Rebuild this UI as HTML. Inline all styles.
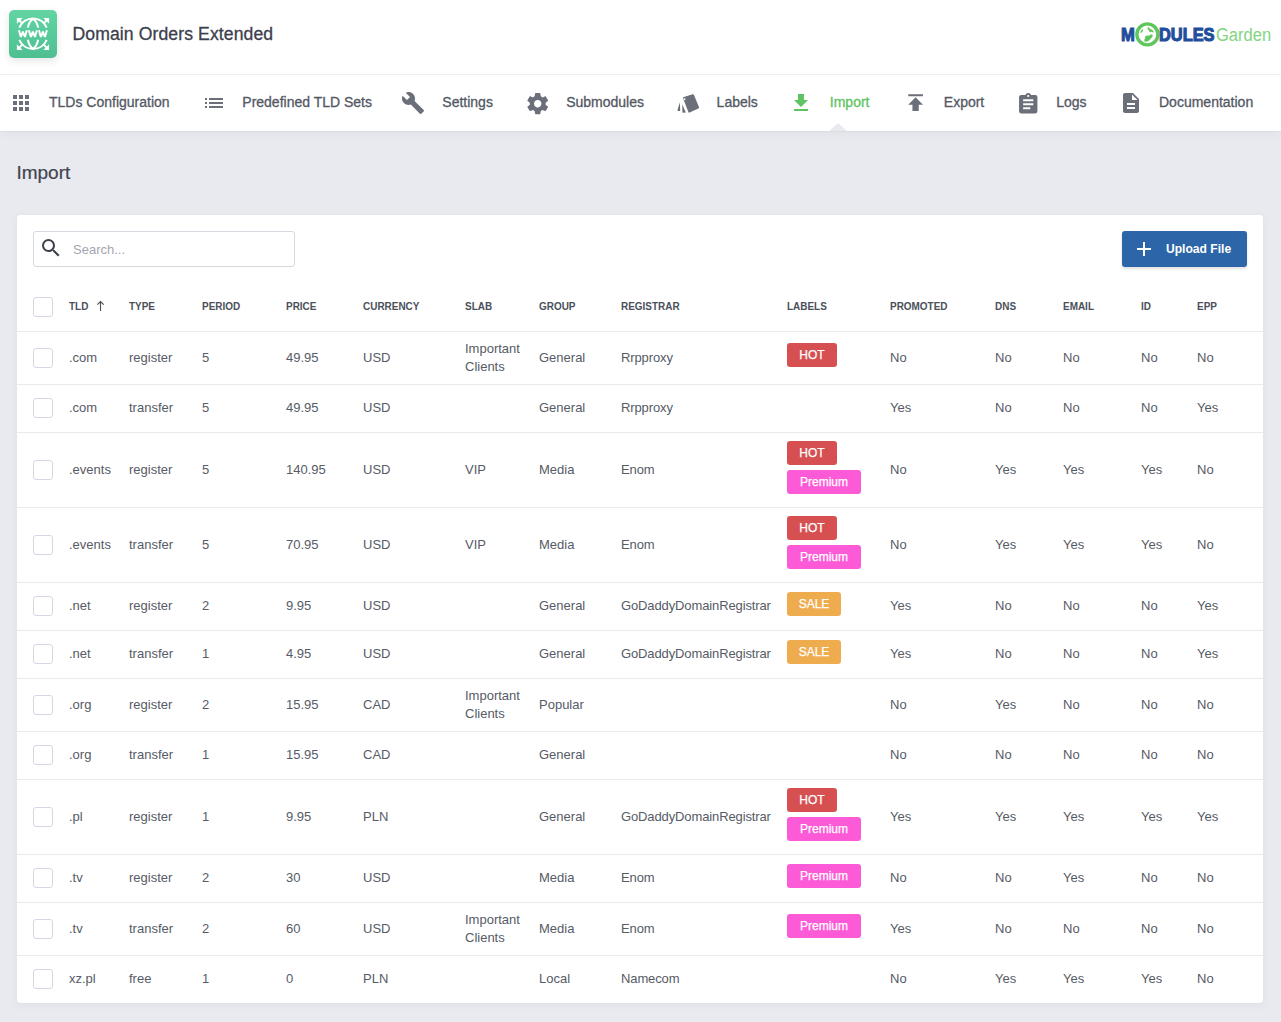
<!DOCTYPE html>
<html><head><meta charset="utf-8">
<style>
*{box-sizing:border-box;margin:0;padding:0}
html,body{width:1281px;height:1022px;overflow:hidden}
body{background:#e9eaef;font-family:"Liberation Sans",sans-serif;position:relative;color:#555a65}
#hdr{position:absolute;left:0;top:0;width:1281px;height:75px;background:#fff;border-bottom:1px solid #eeeff2}
#logo{position:absolute;left:9px;top:10px;width:48px;height:48px;border-radius:5px;background:linear-gradient(180deg,#62d5a3,#4fbf92);box-shadow:0 3px 8px rgba(0,0,0,.10)}
#logo svg{position:absolute;left:0;top:0}
#title{position:absolute;left:72.5px;top:23px;font-size:17.6px;color:#3b404c;white-space:nowrap;line-height:22px;-webkit-text-stroke:0.3px currentColor;letter-spacing:0.1px}
#mg{position:absolute;left:1115px;top:18px;width:165px;height:34px}
#nav{position:absolute;left:0;top:75px;width:1281px;height:56px;background:#fff;box-shadow:0 1px 2px rgba(0,0,0,.03),0 3px 9px rgba(0,0,0,.035)}
.ni{position:absolute;top:0;height:56px}
.ni svg{position:absolute;top:16px;left:0}
.nt{position:absolute;top:19px;font-size:14px;line-height:17px;color:#535864;white-space:nowrap;-webkit-text-stroke:0.3px currentColor}
.act .nt{color:#5cc462}
#caret{position:absolute;left:829px;top:123px;width:0;height:0;border-left:9px solid transparent;border-right:9px solid transparent;border-bottom:8px solid #e9eaef}
#ptitle{position:absolute;left:16.4px;top:162px;font-size:19px;line-height:22px;color:#3f4450;-webkit-text-stroke:0.2px currentColor}
#card{position:absolute;left:17px;top:215px;width:1246px;height:788px;background:#fff;border-radius:4px;box-shadow:0 2px 8px rgba(30,35,60,.05)}
#search{position:absolute;left:16px;top:16px;width:262px;height:36px;border:1px solid #d7d9e0;border-radius:3px}
#search svg{position:absolute;left:5px;top:4px}
#search span{position:absolute;left:39px;top:10px;font-size:13px;line-height:15px;color:#a3a6ae}
#upl{position:absolute;left:1105px;top:16px;width:125px;height:36px;background:#2d66a8;border-radius:3px;box-shadow:0 2px 3px rgba(0,0,0,.12)}
#upl svg{position:absolute;left:14px;top:10px}
#upl span{position:absolute;left:44px;top:10px;font-size:13px;font-weight:700;color:#fff;line-height:16px;white-space:nowrap;transform:scaleX(.93);transform-origin:0 50%}
.grid{position:absolute;left:0;top:68px;border-collapse:collapse;table-layout:fixed;width:1246px}
.grid th{height:48px;text-align:left;vertical-align:middle;padding:0;font-size:11px;font-weight:700;color:#4b505b;white-space:nowrap;border-bottom:1px solid #e9eaee}
.grid td{text-align:left;vertical-align:middle;padding:0;font-size:13px;line-height:18px;color:#565b66;white-space:nowrap;border-bottom:1px solid #e9eaee}
.grid tr:last-child td{border-bottom:none}
.reg{letter-spacing:-0.12px}
.hx{display:inline-block;transform:translateY(-1px) scaleX(.905);transform-origin:0 50%}
.arr{position:absolute;left:79px;top:17px}
.cb{display:block;margin-left:16px;width:20px;height:20px;border:1px solid #d5d8e2;border-radius:3px}
.lbl{display:inline-block;height:24px;line-height:24px;border-radius:3px;color:#fff;font-size:12px;padding:0;text-align:center;-webkit-text-stroke:0.25px #fff;margin:0 0 5px 0;float:left;clear:left}
.hot{background:#d65051;width:50px}
.prem{background:#fd5ad7;width:74px}
.sale{background:#efac4f;width:54px}
</style></head><body>
<div id="hdr">
  <div id="logo"><svg width="48" height="48" viewBox="0 0 48 48"><g fill="none" stroke="#fff" stroke-width="2" stroke-linecap="butt">
<path d="M10.3 17.6 A14.8 14.8 0 0 1 37.7 17.6"/>
<path d="M10.3 29.8 A14.8 14.8 0 0 0 37.7 29.8"/>
<path d="M18.8 17.6 Q20.3 11 24 9.2 Q27.7 11 29.2 17.6"/>
<path d="M18.8 29.8 Q20.3 36.5 24 38.8 Q27.7 36.5 29.2 29.8"/>
<path d="M9 9 L13.6 13.6 M39 9 L34.4 13.6 M9 39 L13.6 34.4 M39 39 L34.4 34.4" stroke-width="1.8"/>
</g><g fill="#fff">
<path d="M7.9 8 H13.7 L11.6 10.1 L10.1 11.6 L7.9 13.7 Z"/>
<path d="M40.1 8 H34.3 L36.4 10.1 L37.9 11.6 L40.1 13.7 Z"/>
<path d="M7.9 40 H13.7 L11.6 37.9 L10.1 36.4 L7.9 34.3 Z"/>
<path d="M40.1 40 H34.3 L36.4 37.9 L37.9 36.4 L40.1 34.3 Z"/>
<path fill="none" stroke="#fff" stroke-width="2" stroke-linejoin="bevel" d="M9.9 20.2 L11.9 27.0 L13.9 21.6 L15.9 27.0 L17.9 20.2 M19.9 20.2 L21.9 27.0 L23.9 21.6 L25.9 27.0 L27.9 20.2 M29.9 20.2 L31.9 27.0 L33.9 21.6 L35.9 27.0 L37.9 20.2"/>
</g></svg></div>
  <div id="title">Domain Orders Extended</div>
  <div id="mg"><svg width="165" height="34" viewBox="1115 18 165 34" style="position:absolute;left:0;top:0">
<text x="1120.9" y="41.2" font-family="Liberation Sans" font-weight="700" font-size="18.4" fill="#1f4e9b" stroke="#1f4e9b" stroke-width="1.1" textLength="13.8" lengthAdjust="spacingAndGlyphs">M</text>
<circle cx="1147.4" cy="34.4" r="10.5" fill="#fff" stroke="#5ec65b" stroke-width="3.4"/>
<path fill="#5ec65b" d="M1142.4 29.2 L1143.2 29.6 L1142.8 31.2 L1141.6 32.6 L1140.6 33.2 L1140.4 32.2 L1141.2 30.6 Z M1147.8 27.0 L1149.4 27.8 L1150.2 29.2 L1151.8 29.6 L1153.4 31.0 L1153.6 32.4 L1152.2 32.2 L1151.0 31.6 L1150.4 32.6 L1149.2 31.6 L1148.8 30.2 L1147.6 29.0 Z M1151.8 34.4 L1152.8 35.0 L1152.4 36.8 L1151.0 38.6 L1149.4 40.2 L1147.6 41.4 L1145.6 41.8 L1144.4 41.2 L1144.2 39.8 L1145.2 38.4 L1144.8 37.0 L1146.0 36.0 L1147.4 35.6 L1148.8 35.8 L1150.2 34.8 Z"/>
<text x="1159" y="41.0" font-family="Liberation Sans" font-weight="700" font-size="18.4" fill="#1f4e9b" stroke="#1f4e9b" stroke-width="1.1" textLength="55.5" lengthAdjust="spacingAndGlyphs">DULES</text>
<text x="1216" y="41.2" font-family="Liberation Sans" font-weight="400" font-size="18.8" fill="#82d47f" textLength="55.2" lengthAdjust="spacingAndGlyphs">Garden</text>
</svg></div>
</div>
<div id="nav">
<svg style="position:absolute;left:9px;top:16px" width="24.00" height="24.00" viewBox="0 0 24 24"><path fill="#6b6f79" d="M4 8h4V4H4v4zm6 12h4v-4h-4v4zm-6 0h4v-4H4v4zm0-6h4v-4H4v4zm6 0h4v-4h-4v4zm6-10v4h4V4h-4zm-6 4h4V4h-4v4zm6 6h4v-4h-4v4zm0 6h4v-4h-4v4z"/></svg>
<svg style="position:absolute;left:201.5px;top:16px" width="24.00" height="24.00" viewBox="0 0 24 24"><path fill="#6b6f79" d="M3 13h2v-2H3v2zm0 4h2v-2H3v2zm0-8h2V7H3v2zm4 4h14v-2H7v2zm0 4h14v-2H7v2zM7 7v2h14V7H7z"/></svg>
<svg style="position:absolute;left:401.4px;top:15.5px" width="24.00" height="24.00" viewBox="0 0 24 24"><path fill="#6b6f79" d="M22.7 19l-9.1-9.1c.9-2.3.4-5-1.5-6.9-2-2-5-2.4-7.4-1.3L9 6 6 9 1.6 4.7C.4 7.1.9 10.1 2.9 12.1c1.9 1.9 4.6 2.4 6.9 1.5l9.1 9.1c.4.4 1 .4 1.4 0l2.3-2.3c.5-.4.5-1.1.1-1.4z"/></svg>
<svg style="position:absolute;left:525.2px;top:16.200000000000003px" width="25.44" height="25.44" viewBox="0 0 24 24"><path fill="#6b6f79" d="M19.43 12.98c.04-.32.07-.64.07-.98s-.03-.66-.07-.98l2.11-1.65c.19-.15.24-.42.12-.64l-2-3.46c-.12-.22-.39-.3-.61-.22l-2.49 1c-.52-.4-1.08-.73-1.69-.98l-.38-2.65C14.460 2.18 14.25 2 14 2h-4c-.25 0-.46.18-.49.42l-.38 2.65c-.61.25-1.17.59-1.690.98l-2.49-1c-.23-.09-.49 0-.61.22l-2 3.46c-.13.22-.07.49.12.64l2.11 1.65c-.04.32-.07.65-.07.98s.03.66.07.98l-2.11 1.65c-.19.15-.24.42-.12.64l2 3.46c.12.22.39.3.61.22l2.49-1c.52.4 1.08.73 1.69.98l.38 2.65c.03.24.24.42.49.42h4c.25 0 .46-.18.49-.42l.38-2.65c.61-.25 1.17-.59 1.69-.98l2.49 1c.23.09.49 0 .61-.22l2-3.46c.12-.22.07-.49-.12-.64l-2.110-1.65zM12 15.5c-1.93 0-3.5-1.57-3.5-3.5s1.57-3.5 3.5-3.5 3.5 1.57 3.5 3.5-1.57 3.5-3.5 3.5z"/></svg>
<svg style="position:absolute;left:789.3px;top:15.900000000000006px" width="24.00" height="24.00" viewBox="0 0 24 24"><path fill="#5cc462" d="M19 9h-4V3H9v6H5l7 7 7-7zM5 18v2h14v-2H5z"/></svg>
<svg style="position:absolute;left:902.9px;top:15.200000000000003px" width="25.20" height="25.20" viewBox="0 0 24 24"><path fill="#6b6f79" d="M5 4v2h14V4H5zm0 10h4v6h6v-6h4l-7-7-7 7z"/></svg>
<svg style="position:absolute;left:1015.8px;top:16.599999999999994px" width="24.48" height="24.48" viewBox="0 0 24 24"><path fill="#6b6f79" d="M19 3h-4.18C14.4 1.84 13.3 1 12 1c-1.3 0-2.4.84-2.82 2H5c-1.1 0-2 .9-2 2v14c0 1.1.9 2 2 2h14c1.1 0 2-.9 2-2V5c0-1.1-.9-2-2-2zm-7 0c.55 0 1 .45 1 1s-.45 1-1 1-1-.45-1-1 .45-1 1-1zm2 14H7v-2h7v2zm3-4H7v-2h10v2zm0-4H7V7h10v2z"/></svg>
<svg style="position:absolute;left:1119px;top:16.200000000000003px" width="24.00" height="24.00" viewBox="0 0 24 24"><path fill="#6b6f79" d="M14 2H6c-1.1 0-1.990.9-1.99 2L4 20c0 1.1.89 2 1.99 2H18c1.1 0 2-.9 2-2V8l-6-6zm2 16H8v-2h8v2zm0-4H8v-2h8v2zm-3-5V3.5L18.5 9H13z"/></svg>
<svg style="position:absolute;left:670px;top:13px" width="40" height="30" viewBox="670 88 40 30"><path fill="#6b6f79" d="M683.2 97.2 L692.6 94.2 Q693.6 93.9 694 94.9 L699 107.2 Q699.3 108.1 698.4 108.5 L689.6 112.6 Q688.7 113 688.4 112 L683 98.3 Q682.7 97.4 683.2 97.2 Z M684.6 98.2 a0.9 0.9 0 1 0 0.01 0 Z" fill-rule="evenodd"/><path fill="#6b6f79" d="M679.9 102.3 L677.5 109.9 Q677.3 110.8 678.2 110.9 L680.2 110.9 Z M682.3 104.2 L682.4 112.2 Q682.5 112.9 683.3 112.8 L685.8 112.5 Z"/></svg>
<div class="nt" style="left:49.0px"><span>TLDs Configuration</span></div>
<div class="nt" style="left:242.3px"><span>Predefined TLD Sets</span></div>
<div class="nt" style="left:442.3px"><span>Settings</span></div>
<div class="nt" style="left:566.2px"><span>Submodules</span></div>
<div class="nt" style="left:716.6px"><span>Labels</span></div>
<div class="nt" style="left:829.8px"><span style="color:#5cc462">Import</span></div>
<div class="nt" style="left:943.8px"><span>Export</span></div>
<div class="nt" style="left:1056.2px"><span>Logs</span></div>
<div class="nt" style="left:1159.0px"><span>Documentation</span></div>
</div>
<div id="caret"></div>
<div id="ptitle">Import</div>
<div id="card">
  <div id="search"><svg width="24" height="24" viewBox="0 0 24 24"><path fill="#3b404b" d="M15.5 14h-.79l-.28-.27A6.471 6.471 0 0 0 16 9.5 6.5 6.5 0 1 0 9.5 16c1.61 0 3.09-.59 4.23-1.57l.27.28v.79l5 4.99L20.49 19l-4.99-5zm-6 0C7.01 14 5 11.99 5 9.5S7.01 5 9.5 5 14 7.01 14 9.5 11.99 14 9.5 14z"/></svg><span>Search...</span></div>
  <div id="upl"><svg width="16" height="16" viewBox="0 0 16 16"><path d="M8 1v14M1 8h14" stroke="#fff" stroke-width="2"/></svg><span>Upload File</span></div>
<table class="grid"><colgroup>
<col style="width:52px">
<col style="width:60px">
<col style="width:73px">
<col style="width:84px">
<col style="width:77px">
<col style="width:102px">
<col style="width:74px">
<col style="width:82px">
<col style="width:166px">
<col style="width:103px">
<col style="width:105px">
<col style="width:68px">
<col style="width:78px">
<col style="width:56px">
<col style="width:66px">
</colgroup><thead><tr>
<th><span class="cb"></span></th>
<th><span class="hx">TLD</span><svg class="arr" width="10" height="14" viewBox="96 300 10 14"><path d="M100.5 301.6V311M97.3 304.7L100.5 301.5 103.7 304.7" fill="none" stroke="#4b505b" stroke-width="1.1"/></svg></th>
<th><span class="hx">TYPE</span></th>
<th><span class="hx">PERIOD</span></th>
<th><span class="hx">PRICE</span></th>
<th><span class="hx">CURRENCY</span></th>
<th><span class="hx">SLAB</span></th>
<th><span class="hx">GROUP</span></th>
<th><span class="hx">REGISTRAR</span></th>
<th><span class="hx">LABELS</span></th>
<th><span class="hx">PROMOTED</span></th>
<th><span class="hx">DNS</span></th>
<th><span class="hx">EMAIL</span></th>
<th><span class="hx">ID</span></th>
<th><span class="hx">EPP</span></th>
</tr></thead><tbody>
<tr style="height:53px">
<td><span class="cb"></span></td>
<td>.com</td>
<td>register</td>
<td>5</td>
<td>49.95</td>
<td>USD</td>
<td class="slab">Important<br>Clients</td>
<td>General</td>
<td class="reg">Rrpproxy</td>
<td><span class="lbl hot">HOT</span></td>
<td>No</td>
<td>No</td>
<td>No</td>
<td>No</td>
<td>No</td>
</tr>
<tr style="height:48px">
<td><span class="cb"></span></td>
<td>.com</td>
<td>transfer</td>
<td>5</td>
<td>49.95</td>
<td>USD</td>
<td class="slab"></td>
<td>General</td>
<td class="reg">Rrpproxy</td>
<td></td>
<td>Yes</td>
<td>No</td>
<td>No</td>
<td>No</td>
<td>Yes</td>
</tr>
<tr style="height:75px">
<td><span class="cb"></span></td>
<td>.events</td>
<td>register</td>
<td>5</td>
<td>140.95</td>
<td>USD</td>
<td class="slab">VIP</td>
<td>Media</td>
<td class="reg">Enom</td>
<td><span class="lbl hot">HOT</span><span class="lbl prem">Premium</span></td>
<td>No</td>
<td>Yes</td>
<td>Yes</td>
<td>Yes</td>
<td>No</td>
</tr>
<tr style="height:75px">
<td><span class="cb"></span></td>
<td>.events</td>
<td>transfer</td>
<td>5</td>
<td>70.95</td>
<td>USD</td>
<td class="slab">VIP</td>
<td>Media</td>
<td class="reg">Enom</td>
<td><span class="lbl hot">HOT</span><span class="lbl prem">Premium</span></td>
<td>No</td>
<td>Yes</td>
<td>Yes</td>
<td>Yes</td>
<td>No</td>
</tr>
<tr style="height:48px">
<td><span class="cb"></span></td>
<td>.net</td>
<td>register</td>
<td>2</td>
<td>9.95</td>
<td>USD</td>
<td class="slab"></td>
<td>General</td>
<td class="reg">GoDaddyDomainRegistrar</td>
<td><span class="lbl sale">SALE</span></td>
<td>Yes</td>
<td>No</td>
<td>No</td>
<td>No</td>
<td>Yes</td>
</tr>
<tr style="height:48px">
<td><span class="cb"></span></td>
<td>.net</td>
<td>transfer</td>
<td>1</td>
<td>4.95</td>
<td>USD</td>
<td class="slab"></td>
<td>General</td>
<td class="reg">GoDaddyDomainRegistrar</td>
<td><span class="lbl sale">SALE</span></td>
<td>Yes</td>
<td>No</td>
<td>No</td>
<td>No</td>
<td>Yes</td>
</tr>
<tr style="height:53px">
<td><span class="cb"></span></td>
<td>.org</td>
<td>register</td>
<td>2</td>
<td>15.95</td>
<td>CAD</td>
<td class="slab">Important<br>Clients</td>
<td>Popular</td>
<td class="reg"></td>
<td></td>
<td>No</td>
<td>Yes</td>
<td>No</td>
<td>No</td>
<td>No</td>
</tr>
<tr style="height:48px">
<td><span class="cb"></span></td>
<td>.org</td>
<td>transfer</td>
<td>1</td>
<td>15.95</td>
<td>CAD</td>
<td class="slab"></td>
<td>General</td>
<td class="reg"></td>
<td></td>
<td>No</td>
<td>No</td>
<td>No</td>
<td>No</td>
<td>No</td>
</tr>
<tr style="height:75px">
<td><span class="cb"></span></td>
<td>.pl</td>
<td>register</td>
<td>1</td>
<td>9.95</td>
<td>PLN</td>
<td class="slab"></td>
<td>General</td>
<td class="reg">GoDaddyDomainRegistrar</td>
<td><span class="lbl hot">HOT</span><span class="lbl prem">Premium</span></td>
<td>Yes</td>
<td>Yes</td>
<td>Yes</td>
<td>Yes</td>
<td>Yes</td>
</tr>
<tr style="height:48px">
<td><span class="cb"></span></td>
<td>.tv</td>
<td>register</td>
<td>2</td>
<td>30</td>
<td>USD</td>
<td class="slab"></td>
<td>Media</td>
<td class="reg">Enom</td>
<td><span class="lbl prem">Premium</span></td>
<td>No</td>
<td>No</td>
<td>Yes</td>
<td>No</td>
<td>No</td>
</tr>
<tr style="height:53px">
<td><span class="cb"></span></td>
<td>.tv</td>
<td>transfer</td>
<td>2</td>
<td>60</td>
<td>USD</td>
<td class="slab">Important<br>Clients</td>
<td>Media</td>
<td class="reg">Enom</td>
<td><span class="lbl prem">Premium</span></td>
<td>Yes</td>
<td>No</td>
<td>No</td>
<td>No</td>
<td>No</td>
</tr>
<tr style="height:48px">
<td><span class="cb"></span></td>
<td>xz.pl</td>
<td>free</td>
<td>1</td>
<td>0</td>
<td>PLN</td>
<td class="slab"></td>
<td>Local</td>
<td class="reg">Namecom</td>
<td></td>
<td>No</td>
<td>Yes</td>
<td>Yes</td>
<td>Yes</td>
<td>No</td>
</tr>
</tbody></table>
</div>
</body></html>
